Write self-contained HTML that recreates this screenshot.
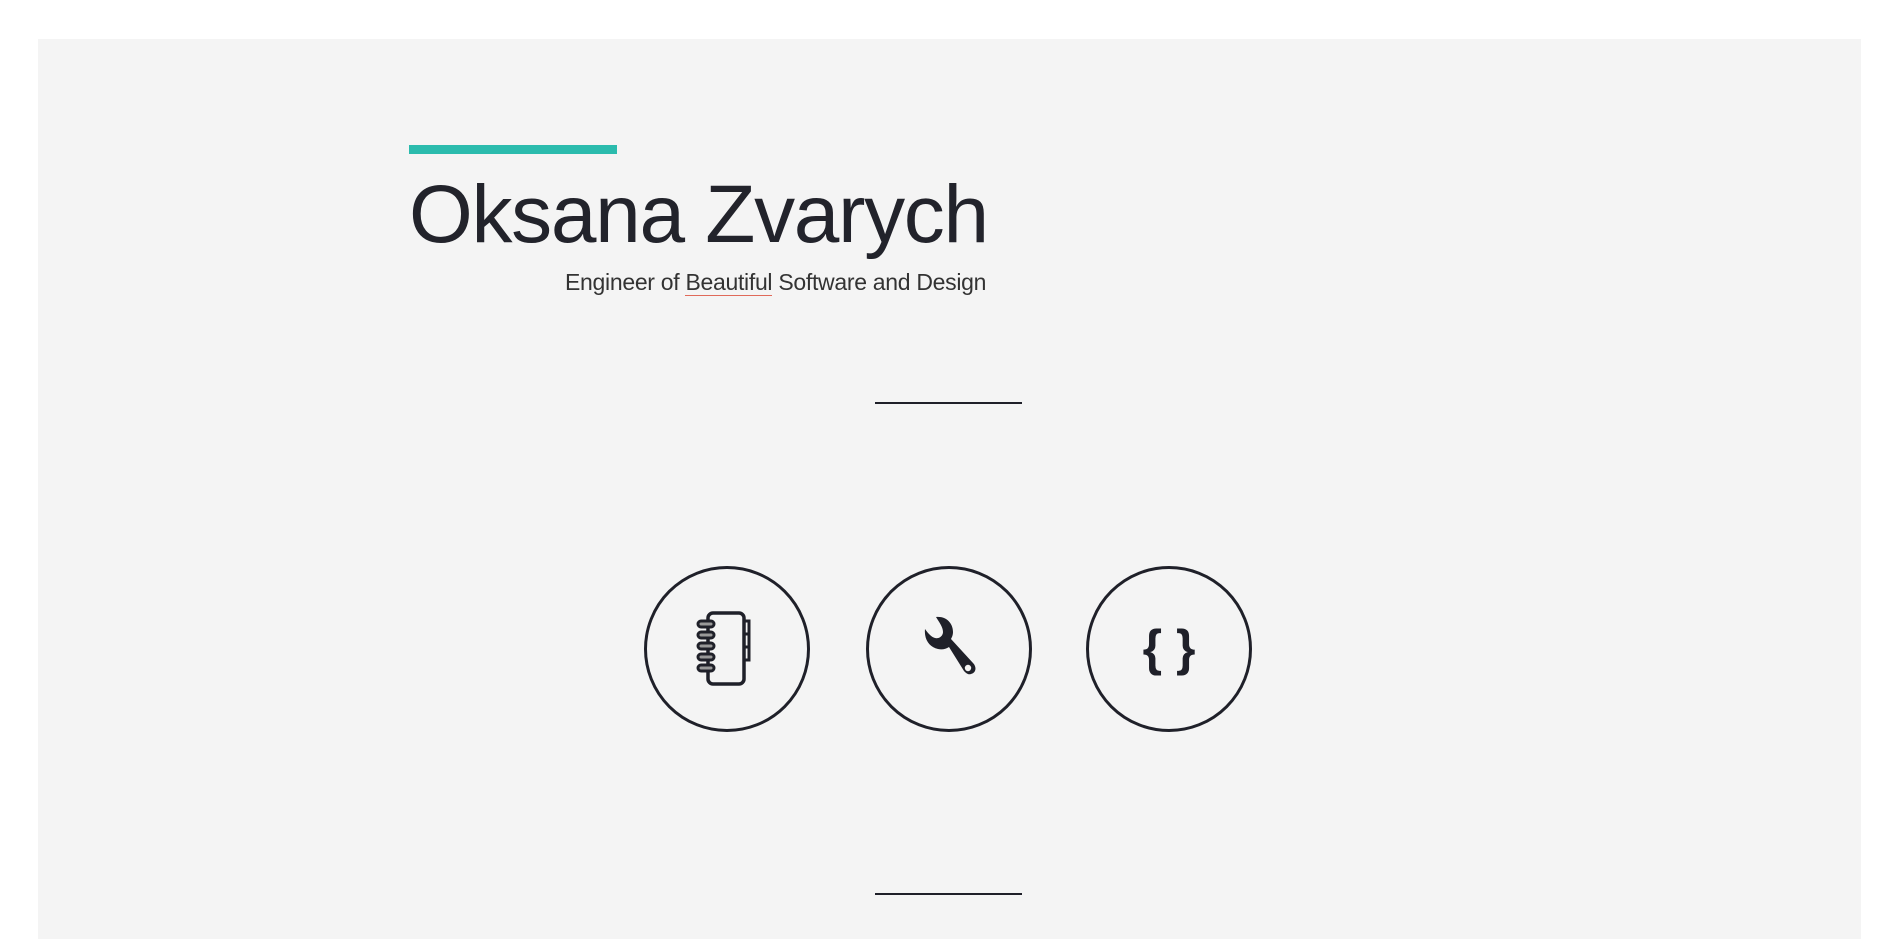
<!DOCTYPE html>
<html><head><style>
body{margin:0;width:1901px;height:909px;background:#fff;overflow:hidden;font-family:"Liberation Sans",sans-serif;color:#1f2029}
.panel{position:absolute;left:38px;top:39px;width:1823px;height:900px;background:#f4f4f4}
.bar{position:absolute;left:409px;top:145px;width:208px;height:9px;background:#2bbbad}
h1{position:absolute;left:409px;top:165px;margin:0;font-weight:300;font-size:82px;line-height:100px;letter-spacing:-1.3px;white-space:nowrap;color:#22232b}
.sub{position:absolute;left:565px;top:269px;font-size:23px;color:#333;white-space:nowrap;letter-spacing:-0.3px}
.sub u{text-decoration:none;border-bottom:1px solid #e06a5a}
.hr{position:absolute;left:875px;width:147px;height:2px;background:#1f2029}
.c{position:absolute;top:566px;width:166px;height:166px;border:3.5px solid #1f2029;border-radius:50%;box-sizing:border-box}
.c svg{position:absolute;left:-3.5px;top:-3.5px}
</style></head><body>
<div class="panel"></div>
<div class="bar"></div>
<h1>Oksana Zvarych</h1>
<div class="sub">Engineer of <u>Beautiful</u> Software and Design</div>
<div class="hr" style="top:402px"></div>
<div class="hr" style="top:893px"></div>
<div class="c" style="left:644px"><svg width="166" height="166" viewBox="0 0 166 166">
<rect x="64" y="47" width="36" height="71" rx="5" fill="none" stroke="#1f2029" stroke-width="3.5"/>
<path d="M100 55h5v13h-5M100 68h5v13h-5M100 81h5v13h-5" fill="none" stroke="#1f2029" stroke-width="3"/>
<g fill="#999" stroke="#1f2029" stroke-width="3">
<rect x="54" y="55" width="16" height="6" rx="3"/><rect x="54" y="66" width="16" height="6" rx="3"/><rect x="54" y="77" width="16" height="6" rx="3"/><rect x="54" y="88" width="16" height="6" rx="3"/><rect x="54" y="99" width="16" height="6" rx="3"/></g></svg></div>
<div class="c" style="left:866px"><svg width="166" height="166" viewBox="0 0 166 166">
<path d="M70 51c10-1 17 6 17 15 0 3-1 5-2 7l22 24c4 4 3 10-2 11-3 1-5-1-7-3L83 81c-3 2-7 3-11 2-9-2-14-10-13-20 3 4 6 8 10 9 4 1 8-2 8-6 0-5-4-10-7-15z" fill="#1f2029"/>
<circle cx="102" cy="102" r="3.2" fill="#f4f4f4"/></svg></div>
<div class="c" style="left:1086px"><svg width="166" height="166" viewBox="0 0 166 166">
<text x="83" y="99" text-anchor="middle" font-family="Liberation Sans,sans-serif" font-weight="bold" font-size="50" fill="#1f2029">{ }</text></svg></div>
</body></html>
